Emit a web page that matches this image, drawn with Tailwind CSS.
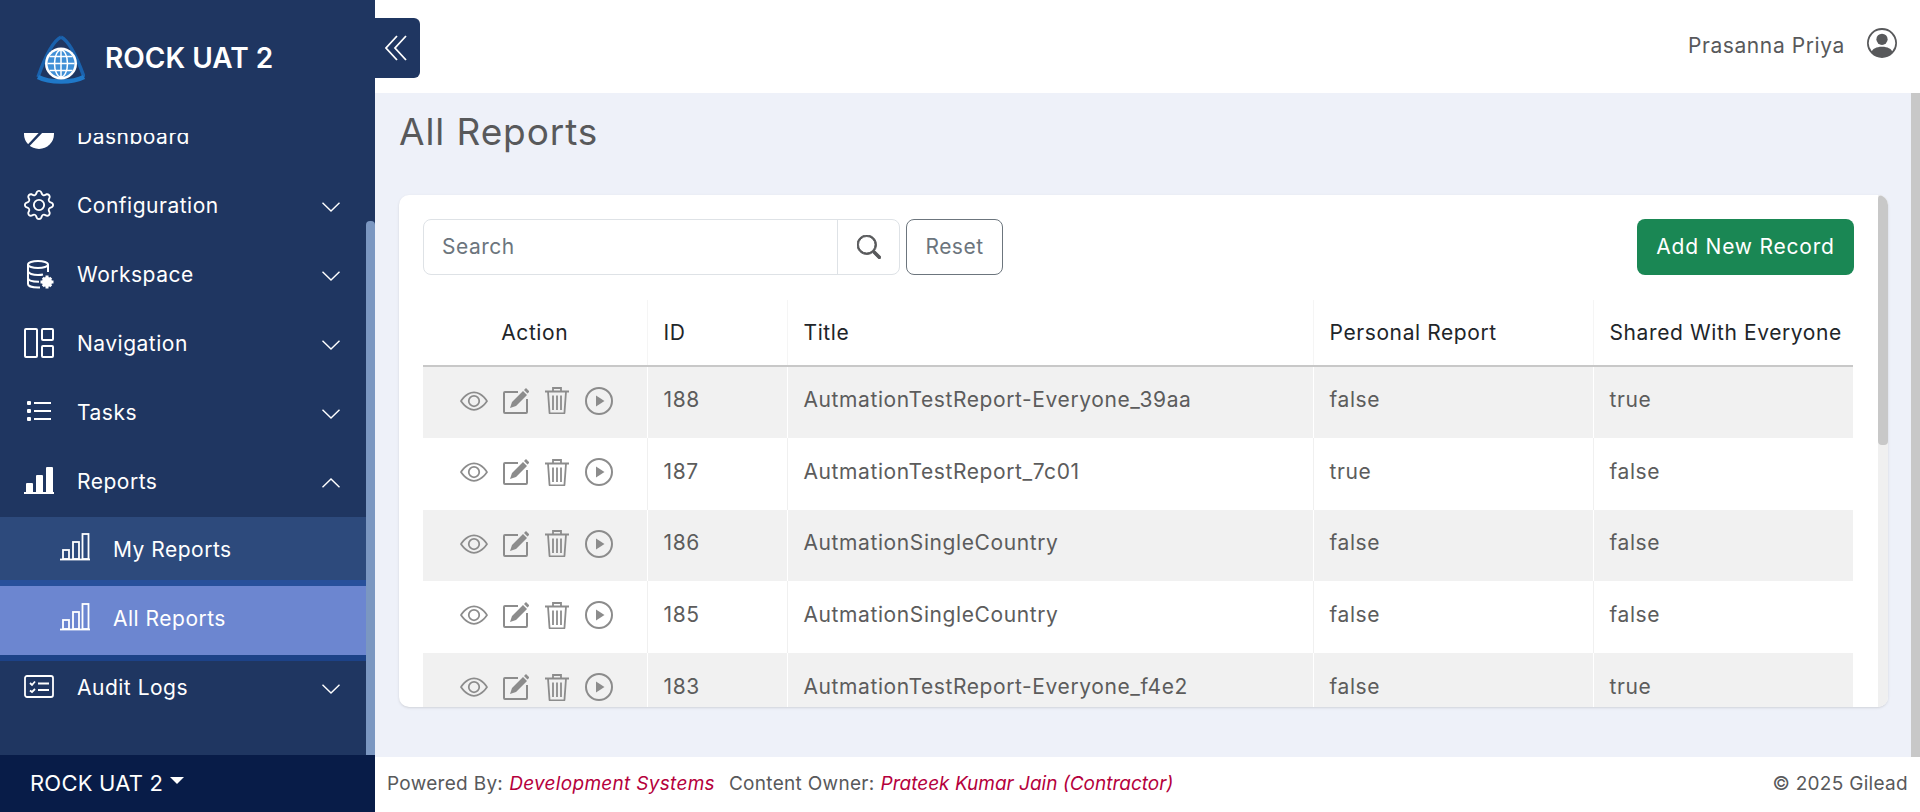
<!DOCTYPE html>
<html lang="en"><head><meta charset="utf-8"><title>All Reports</title>
<script src="https://cdn.jsdelivr.net/npm/@tailwindcss/browser@4"></script></head>
<body class="font-['Inter',sans-serif] overflow-hidden">
<svg class="hidden" width="0" height="0">
  <symbol id="eye" viewBox="0 0 16 16"><path fill="#8c8c8c" d="M16 8s-3-5.500-8-5.500S0 8 0 8s3 5.500 8 5.500S16 8 16 8M1.173 8a13 13 0 0 1 1.660-2.043C4.120 4.668 5.880 3.500 8 3.500s3.879 1.168 5.168 2.457A13 13 0 0 1 14.828 8q-.086.130-.195.288c-.335.480-.830 1.120-1.465 1.755C11.879 11.332 10.119 12.500 8 12.500s-3.879-1.168-5.168-2.457A13 13 0 0 1 1.172 8z"/><path fill="#8c8c8c" d="M8 5.500a2.500 2.500 0 1 0 0 5 2.500 2.500 0 0 0 0-5M4.500 8a3.500 3.500 0 1 1 7 0 3.500 3.500 0 0 1-7 0"/></symbol>
  <symbol id="edit" viewBox="0 0 26 26"><path d="M15 4H2a1 1 0 0 0-1 1V24a1 1 0 0 0 1 1H23a1 1 0 0 0 1-1V11" fill="none" stroke="#8c8c8c" stroke-width="2"/><path d="M7 20 9 14 20 3 24 7 13 18ZM21 2 23 0 26.500 3.500 24.500 5.500Z" fill="#8c8c8c"/></symbol>
  <symbol id="trash" viewBox="0 0 24 27"><path fill="none" stroke="#8c8c8c" stroke-width="1.800" d="M0 4.500H24M8 4.500V1H16V4.500M3 4.500 4.500 25.500a1 1 0 0 0 1 1H18.500a1 1 0 0 0 1-1L21 4.500M8 8.500V23M12 8.500V23M16 8.500V23"/></symbol>
  <symbol id="play" viewBox="0 0 28 28"><circle cx="14" cy="14" r="13" fill="none" stroke="#8c8c8c" stroke-width="2"/><path d="M11 8.500 19.500 14 11 19.500Z" fill="#8c8c8c"/></symbol>
  <symbol id="down" viewBox="0 0 18 10"><path fill="none" stroke="#fff" stroke-width="1.400" d="M.5.7 9 9 17.5.7"/></symbol>
  <symbol id="bars" viewBox="0 0 30 30"><g fill="none" stroke="#fff" stroke-width="1.800"><rect x="3" y="18" width="6" height="9"/><rect x="13" y="10" width="6" height="17"/><rect x="22.500" y="2" width="6" height="25"/><path d="M0 27.500H30"/></g></symbol>
</svg>
<div class="flex h-[812px] w-[1920px] relative bg-white">
  <aside class="w-[375px] shrink-0 flex flex-col bg-[#1f3661] text-white">
    <div class="h-[133px] shrink-0 flex items-start pl-[35px] pt-[34px] gap-[20px]">
      <svg class="w-[50px] h-[50px] shrink-0" viewBox="0 0 50 50">
        <g fill="none" stroke="#1a62ad"><path stroke-width="3.500" d="M26 3C18 7 10 23 3 43M26 3C34 7 42 23 49 43"/><path stroke-width="4.500" stroke="#1f78c8" d="M3 43C14 49 38 49 49 43"/></g>
        <circle cx="26" cy="29.500" r="16" fill="#fff"/>
        <circle cx="26" cy="29.500" r="13.500" fill="#3f8fd6"/>
        <g fill="none" stroke="#fff" stroke-width="1.500"><ellipse cx="26" cy="29.500" rx="6.500" ry="13.500"/><path d="M26 16V43M12.500 29.500H39.500M14.500 22.500H37.500M14.500 36.500H37.500"/></g>
      </svg>
      <span class="text-[28px] leading-[48px] font-semibold whitespace-nowrap">ROCK UAT 2</span>
    </div>
    <div class="flex-1 relative overflow-hidden">
      <div class="absolute right-0 top-[88px] bottom-0 w-[9px] bg-[#7b97c1] rounded-t-[4px]"></div>
      <nav class="-mt-[30px] text-[21px] tracking-[0.5px] pr-[9px]">
        <div class="h-[69px] flex items-center pl-[24px] pb-[2px]">
          <svg class="w-[30px] h-[30px] mr-[23px] mb-[6px] shrink-0" viewBox="0 0 30 30"><circle cx="15" cy="15" r="15" fill="#fff"/><path d="M24 6 4 27" stroke="#1f3661" stroke-width="2.500"/></svg>
          <span>Dashboard</span>
        </div>
        <div class="h-[69px] flex items-center pl-[24px] pb-[2px]">
          <svg class="w-[30px] h-[30px] mr-[23px] mb-[2px] shrink-0" viewBox="0 0 16 16" fill="#fff"><path d="M8 4.754a3.246 3.246 0 1 0 0 6.492 3.246 3.246 0 0 0 0-6.492M5.754 8a2.246 2.246 0 1 1 4.492 0 2.246 2.246 0 0 1-4.492 0"/><path d="M9.796 1.343c-.527-1.790-3.065-1.790-3.592 0l-.094.319a.873.873 0 0 1-1.255.52l-.292-.16c-1.640-.892-3.433.902-2.540 2.541l.159.292a.873.873 0 0 1-.52 1.255l-.319.094c-1.790.527-1.790 3.065 0 3.592l.319.094a.873.873 0 0 1 .52 1.255l-.16.292c-.892 1.640.901 3.434 2.541 2.540l.292-.159a.873.873 0 0 1 1.255.52l.094.319c.527 1.790 3.065 1.790 3.592 0l.094-.319a.873.873 0 0 1 1.255-.52l.292.16c1.640.893 3.434-.902 2.540-2.541l-.159-.292a.873.873 0 0 1 .52-1.255l.319-.094c1.790-.527 1.790-3.065 0-3.592l-.319-.094a.873.873 0 0 1-.52-1.255l.16-.292c.893-1.640-.902-3.433-2.541-2.540l-.292.159a.873.873 0 0 1-1.255-.52zm-2.633.283c.246-.835 1.428-.835 1.674 0l.094.319a1.873 1.873 0 0 0 2.693 1.115l.291-.16c.764-.415 1.600.42 1.184 1.185l-.159.292a1.873 1.873 0 0 0 1.116 2.692l.318.094c.835.246.835 1.428 0 1.674l-.319.094a1.873 1.873 0 0 0-1.115 2.693l.16.291c.415.764-.42 1.600-1.185 1.184l-.291-.159a1.873 1.873 0 0 0-2.693 1.116l-.094.318c-.246.835-1.428.835-1.674 0l-.094-.319a1.873 1.873 0 0 0-2.692-1.115l-.292.16c-.764.415-1.600-.42-1.184-1.185l.159-.291A1.873 1.873 0 0 0 1.945 8.930l-.319-.094c-.835-.246-.835-1.428 0-1.674l.319-.094A1.873 1.873 0 0 0 3.060 4.377l-.16-.292c-.415-.764.42-1.600 1.185-1.184l.292.159a1.873 1.873 0 0 0 2.692-1.115z"/></svg>
          <span class="flex-1">Configuration</span>
          <svg class="w-[18px] h-[10px] mr-[26px] mt-[2px]"><use href="#down"/></svg>
        </div>
        <div class="h-[69px] flex items-center pl-[24px] pb-[2px]">
          <svg class="w-[30px] h-[30px] mr-[23px] mb-[2px] shrink-0" viewBox="0 0 30 30" fill="none" stroke="#fff" stroke-width="2"><ellipse cx="14" cy="5.500" rx="10" ry="3.500"/><path d="M4 5.500V25C4 27 8 28.500 14 28.500H16M24 5.500V13M4 12C4 14.500 9 16 14 16C16 16 18 15.800 19 15.500M4 19C4 21.500 9 22.800 15 22.800"/><g fill="#fff" stroke="none"><circle cx="23" cy="23" r="5"/><path d="M21.500 16.500H24.500V19H21.500ZM21.500 27H24.500V29.500H21.500ZM16.500 21.500H19V24.500H16.500ZM27 21.500H29.500V24.500H27ZM17.800 19.800 19.800 17.800 21.500 19.500 19.500 21.500ZM24.500 26.500 26.500 24.500 28.200 26.200 26.200 28.200ZM26.200 17.800 28.200 19.800 26.500 21.500 24.500 19.500ZM19.500 24.500 21.500 26.500 19.800 28.200 17.800 26.200Z"/></g></svg>
          <span class="flex-1">Workspace</span>
          <svg class="w-[18px] h-[10px] mr-[26px] mt-[2px]"><use href="#down"/></svg>
        </div>
        <div class="h-[69px] flex items-center pl-[24px] pb-[2px]">
          <svg class="w-[30px] h-[30px] mr-[23px] mb-[2px] shrink-0" viewBox="0 0 30 30" fill="none" stroke="#fff" stroke-width="2"><rect x="1" y="1" width="12" height="28" rx="1"/><rect x="18" y="1" width="11" height="11" rx="1"/><rect x="18" y="18" width="11" height="11" rx="1"/></svg>
          <span class="flex-1">Navigation</span>
          <svg class="w-[18px] h-[10px] mr-[26px] mt-[2px]"><use href="#down"/></svg>
        </div>
        <div class="h-[69px] flex items-center pl-[24px] pb-[2px]">
          <svg class="w-[30px] h-[30px] mr-[23px] mb-[2px] shrink-0" viewBox="0 0 30 30" fill="#fff"><rect x="3" y="4" width="4" height="4" rx="1"/><rect x="3" y="12" width="4" height="4" rx="1"/><rect x="3" y="20" width="4" height="4" rx="1"/><rect x="10" y="5" width="17" height="2"/><rect x="10" y="13" width="17" height="2"/><rect x="10" y="21" width="17" height="2"/></svg>
          <span class="flex-1">Tasks</span>
          <svg class="w-[18px] h-[10px] mr-[26px] mt-[2px]"><use href="#down"/></svg>
        </div>
        <div class="h-[69px] flex items-center pl-[24px] pb-[2px]">
          <svg class="w-[30px] h-[30px] mr-[23px] mb-[2px] shrink-0" viewBox="0 0 30 30" fill="#fff"><rect x="2" y="17" width="7" height="10" rx="1"/><rect x="12" y="9" width="7" height="18" rx="1"/><rect x="22" y="1" width="7" height="26" rx="1"/><rect x="0" y="26" width="30" height="2"/></svg>
          <span class="flex-1">Reports</span>
          <svg class="w-[18px] h-[10px] mr-[26px] mt-[2px]" viewBox="0 0 18 10" fill="none" stroke="#fff" stroke-width="1.400"><path d="M.5 9.300 9 1 17.500 9.300"/></svg>
        </div>
        <div class="h-[63px] flex items-center pl-[60px] pt-[2px] bg-[#2d4a7c]">
          <svg class="w-[30px] h-[30px] mr-[23px] mb-[5px] shrink-0"><use href="#bars"/></svg>
          <span>My Reports</span>
        </div>
        <div class="h-[6px] bg-[#27509b]"></div>
        <div class="h-[69px] flex items-center pl-[60px] pb-[3px] bg-[#6c86d0]">
          <svg class="w-[30px] h-[30px] mr-[23px] mb-[4px] shrink-0"><use href="#bars"/></svg>
          <span>All Reports</span>
        </div>
        <div class="h-[6px] bg-[#1c4288]"></div>
        <div class="h-[54px] flex items-center pl-[24px]">
          <svg class="w-[30px] h-[30px] mr-[23px] mb-[2px] shrink-0" viewBox="0 0 30 30" fill="none" stroke="#fff" stroke-width="1.800"><rect x="1" y="4" width="28" height="21" rx="2"/><path d="M6 11 8 13 11 9.500M6 18.500 8 20 11 17M14 11.500H25M14 18H25"/></svg>
          <span class="flex-1">Audit Logs</span>
          <svg class="w-[18px] h-[10px] mr-[26px] mt-[2px]"><use href="#down"/></svg>
        </div>
      </nav>
    </div>
    <div class="h-[57px] shrink-0 bg-[#081c48] flex items-center pl-[30px] text-[22px] tracking-[0.2px] gap-[7px]">
      <span>ROCK UAT 2</span>
      <span class="block w-0 h-0 mb-[6px] border-x-[7px] border-x-transparent border-t-[7px] border-t-white"></span>
    </div>
  </aside>

  <main class="flex-1 flex flex-col min-w-0">
    <header class="h-[93px] shrink-0 flex items-start justify-end pr-[23px] pt-[28px] gap-[22px] text-[21px] tracking-[0.6px] text-[#58595b]">
      <span class="leading-[36px]">Prasanna Priya</span>
      <svg class="w-[30px] h-[30px]" viewBox="0 0 16 16" fill="#58595b"><path d="M11 6a3 3 0 1 1-6 0 3 3 0 0 1 6 0"/><path fill-rule="evenodd" d="M0 8a8 8 0 1 1 16 0A8 8 0 0 1 0 8m8-7a7 7 0 0 0-5.468 11.370C3.242 11.226 4.805 10 8 10s4.757 1.225 5.468 2.370A7 7 0 0 0 8 1"/></svg>
    </header>
    <section class="flex-1 min-h-0 flex bg-[#eef1f9]">
      <div class="flex-1 min-w-0 pl-[24px] pr-[23px] pt-[14px]">
        <h1 class="text-[37px] tracking-[0.9px] leading-[50px] text-[#58595b] mb-[38px]">All Reports</h1>
        <div class="h-[512px] rounded-[10px] bg-white overflow-hidden relative shadow-sm pl-[24px] pr-[34px] pt-[24px]">
          <div class="absolute right-0 top-0 bottom-0 w-[10px] bg-[#f0f0f0]"><div class="h-[250px] rounded-[4px] bg-[#c8c8c8]"></div></div>
          <div class="flex items-center h-[56px] text-[21px] tracking-[0.5px]">
            <div class="flex h-full w-[477px] border border-[#dee2e6] rounded-[8px]">
              <div class="flex-1 flex items-center pl-[18px] text-[#6c757d]">Search</div>
              <div class="w-[62px] border-l border-[#dee2e6] flex items-center justify-center">
                <svg class="w-[24px] h-[24px]" viewBox="0 0 16 16" fill="#58595b"><path d="M11.742 10.344a6.500 6.500 0 1 0-1.397 1.398l3.850 3.850a1 1 0 0 0 1.415-1.414l-3.850-3.850zM12 6.500a5.500 5.500 0 1 1-11 0 5.500 5.500 0 0 1 11 0" stroke="#58595b" stroke-width=".6"/></svg>
              </div>
            </div>
            <button class="ml-[6px] w-[97px] h-full border border-[#6c757d] rounded-[8px] text-[#6c757d]">Reset</button>
            <button class="ml-auto w-[217px] h-full rounded-[8px] bg-[#1a8754] text-white tracking-[0.8px]">Add New Record</button>
          </div>
          <table class="mt-[25px] w-[1430px] table-fixed border-collapse text-[21px] tracking-[0.6px] text-[#5c5c5c]">
            <colgroup><col class="w-[224px]"><col class="w-[140px]"><col class="w-[526px]"><col class="w-[280px]"><col class="w-[260px]"></colgroup>
            <thead class="text-[#212529]">
              <tr class="h-[66px] border-b-2 border-[#c8c8c8] text-left">
                <th class="font-normal text-center border-r border-[#f5f5f5]">Action</th>
                <th class="font-normal pl-[16px] border-r border-[#f5f5f5]">ID</th>
                <th class="font-normal pl-[16px] border-r border-[#f5f5f5]">Title</th>
                <th class="font-normal pl-[16px] border-r border-[#f5f5f5]">Personal Report</th>
                <th class="font-normal pl-[16px] whitespace-nowrap">Shared With Everyone</th>
              </tr>
            </thead>
            <tbody>
              <tr class="h-[72px] bg-[#f1f1f1] [&>td]:pb-[5px]">
                <td class="border-r border-white"><div class="flex items-center pl-[37px] mt-[1px]">
                  <svg class="w-[28px] h-[28px] mr-[15px]"><use href="#eye"/></svg><svg class="w-[26px] h-[26px] mr-[16px]"><use href="#edit"/></svg><svg class="w-[24px] h-[27px] mr-[16px]"><use href="#trash"/></svg><svg class="w-[28px] h-[28px]"><use href="#play"/></svg>
                </div></td>
                <td class="pl-[16px] border-r border-white">188</td><td class="pl-[16px] border-r border-white">AutmationTestReport-Everyone_39aa</td><td class="pl-[16px] border-r border-white">false</td><td class="pl-[16px]">true</td>
              </tr>
              <tr class="h-[72px] bg-white [&>td]:pb-[5px]">
                <td class="border-r border-[#f0f0f0]"><div class="flex items-center pl-[37px] mt-[1px]">
                  <svg class="w-[28px] h-[28px] mr-[15px]"><use href="#eye"/></svg><svg class="w-[26px] h-[26px] mr-[16px]"><use href="#edit"/></svg><svg class="w-[24px] h-[27px] mr-[16px]"><use href="#trash"/></svg><svg class="w-[28px] h-[28px]"><use href="#play"/></svg>
                </div></td>
                <td class="pl-[16px] border-r border-[#f0f0f0]">187</td><td class="pl-[16px] border-r border-[#f0f0f0]">AutmationTestReport_7c01</td><td class="pl-[16px] border-r border-[#f0f0f0]">true</td><td class="pl-[16px]">false</td>
              </tr>
              <tr class="h-[71px] bg-[#f1f1f1] [&>td]:pb-[5px]">
                <td class="border-r border-white"><div class="flex items-center pl-[37px] mt-[1px]">
                  <svg class="w-[28px] h-[28px] mr-[15px]"><use href="#eye"/></svg><svg class="w-[26px] h-[26px] mr-[16px]"><use href="#edit"/></svg><svg class="w-[24px] h-[27px] mr-[16px]"><use href="#trash"/></svg><svg class="w-[28px] h-[28px]"><use href="#play"/></svg>
                </div></td>
                <td class="pl-[16px] border-r border-white">186</td><td class="pl-[16px] border-r border-white">AutmationSingleCountry</td><td class="pl-[16px] border-r border-white">false</td><td class="pl-[16px]">false</td>
              </tr>
              <tr class="h-[72px] bg-white [&>td]:pb-[5px]">
                <td class="border-r border-[#f0f0f0]"><div class="flex items-center pl-[37px] mt-[1px]">
                  <svg class="w-[28px] h-[28px] mr-[15px]"><use href="#eye"/></svg><svg class="w-[26px] h-[26px] mr-[16px]"><use href="#edit"/></svg><svg class="w-[24px] h-[27px] mr-[16px]"><use href="#trash"/></svg><svg class="w-[28px] h-[28px]"><use href="#play"/></svg>
                </div></td>
                <td class="pl-[16px] border-r border-[#f0f0f0]">185</td><td class="pl-[16px] border-r border-[#f0f0f0]">AutmationSingleCountry</td><td class="pl-[16px] border-r border-[#f0f0f0]">false</td><td class="pl-[16px]">false</td>
              </tr>
              <tr class="h-[72px] bg-[#f1f1f1] [&>td]:pb-[5px]">
                <td class="border-r border-white"><div class="flex items-center pl-[37px] mt-[1px]">
                  <svg class="w-[28px] h-[28px] mr-[15px]"><use href="#eye"/></svg><svg class="w-[26px] h-[26px] mr-[16px]"><use href="#edit"/></svg><svg class="w-[24px] h-[27px] mr-[16px]"><use href="#trash"/></svg><svg class="w-[28px] h-[28px]"><use href="#play"/></svg>
                </div></td>
                <td class="pl-[16px] border-r border-white">183</td><td class="pl-[16px] border-r border-white">AutmationTestReport-Everyone_f4e2</td><td class="pl-[16px] border-r border-white">false</td><td class="pl-[16px]">true</td>
              </tr>
            </tbody>
          </table>
        </div>
      </div>
      <div class="w-[9px] bg-[#c8c8c8] shrink-0"></div>
    </section>
    <footer class="h-[55px] shrink-0 flex items-center pl-[12px] pr-[12px] text-[19px] tracking-[0.3px] text-[#58595b]">
      <span>Powered By:</span>
      <span class="ml-[6px] italic text-[#b5003c]">Development Systems</span>
      <span class="ml-[14px]">Content Owner:</span>
      <span class="ml-[6px] italic tracking-normal text-[#b5003c]">Prateek Kumar Jain (Contractor)</span>
      <span class="ml-auto">© 2025 Gilead</span>
    </footer>
  </main>

  <button class="absolute left-[375px] top-[18px] w-[45px] h-[60px] bg-[#1f3661] rounded-r-[6px] flex items-center justify-center pr-[4px]" aria-label="Collapse">
    <svg class="w-[22px] h-[26px]" viewBox="0 0 22 26" fill="none" stroke="#fff" stroke-width="1.800"><path d="M12 1 1 13 12 25M21 1 10 13 21 25"/></svg>
  </button>
</div>
</body></html>
